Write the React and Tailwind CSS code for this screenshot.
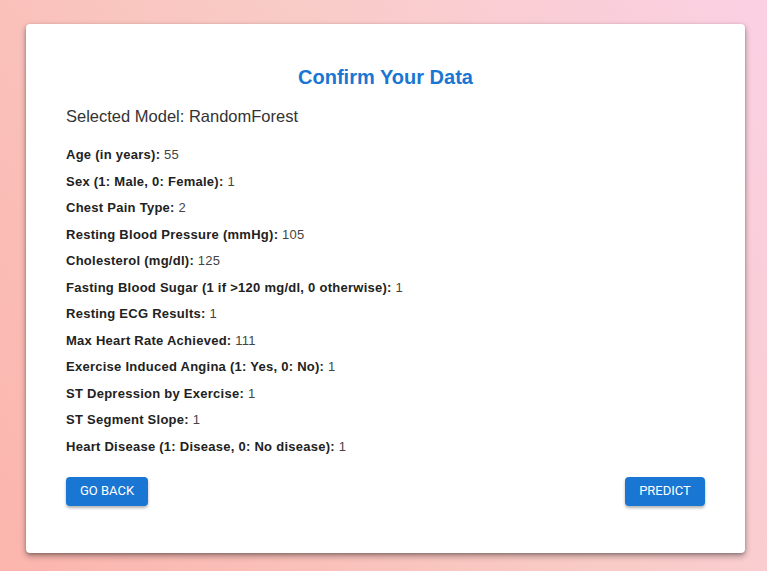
const rows = [
  ["Age (in years)", "55"],
  ["Sex (1: Male, 0: Female)", "1"],
  ["Chest Pain Type", "2"],
  ["Resting Blood Pressure (mmHg)", "105"],
  ["Cholesterol (mg/dl)", "125"],
  ["Fasting Blood Sugar (1 if >120 mg/dl, 0 otherwise)", "1"],
  ["Resting ECG Results", "1"],
  ["Max Heart Rate Achieved", "111"],
  ["Exercise Induced Angina (1: Yes, 0: No)", "1"],
  ["ST Depression by Exercise", "1"],
  ["ST Segment Slope", "1"],
  ["Heart Disease (1: Disease, 0: No disease)", "1"],
];

export default function App() {
  return (
    <main className="h-[571px] w-full bg-[linear-gradient(60deg,#fbb5ad_0%,#f9cbc6_55%,#fbd0e3_100%)] pt-[24px] font-['Liberation_Sans',Arial,sans-serif]">
      <div className="ml-[26px] h-[529px] w-[719px] rounded-[4px] bg-white px-10 pt-[40px] shadow-[0_3px_6px_rgba(0,0,0,0.35),0_1px_3px_rgba(0,0,0,0.2)]">
        <h1 className="text-center text-[20px] font-bold leading-[26px] text-[#1976d2]">Confirm Your Data</h1>
        <p className="mt-[14px] text-[16.5px] leading-[24px] text-[#333]">Selected Model: RandomForest</p>
        <div className="mt-[14px]">
          {rows.map(([label, value]) => (
            <p key={label} className="text-[13px] leading-[26.55px] tracking-[0.02em] text-[#222]">
              <span className="font-bold">{label}:</span> <span className="text-[#444]">{value}</span>
            </p>
          ))}
        </div>
        <div className="mt-[16px] flex justify-between">
          <button type="button" className="h-[29px] w-[82px] rounded-[4px] bg-[#1976d2] font-['Roboto',sans-serif] text-[13px] font-normal uppercase text-white shadow-[0_2px_3px_rgba(0,0,0,0.3)]">
            Go Back
          </button>
          <button type="button" className="h-[29px] w-[80px] rounded-[4px] bg-[#1976d2] font-['Roboto',sans-serif] text-[13px] font-normal uppercase text-white shadow-[0_2px_3px_rgba(0,0,0,0.3)]">
            Predict
          </button>
        </div>
      </div>
    </main>
  );
}
